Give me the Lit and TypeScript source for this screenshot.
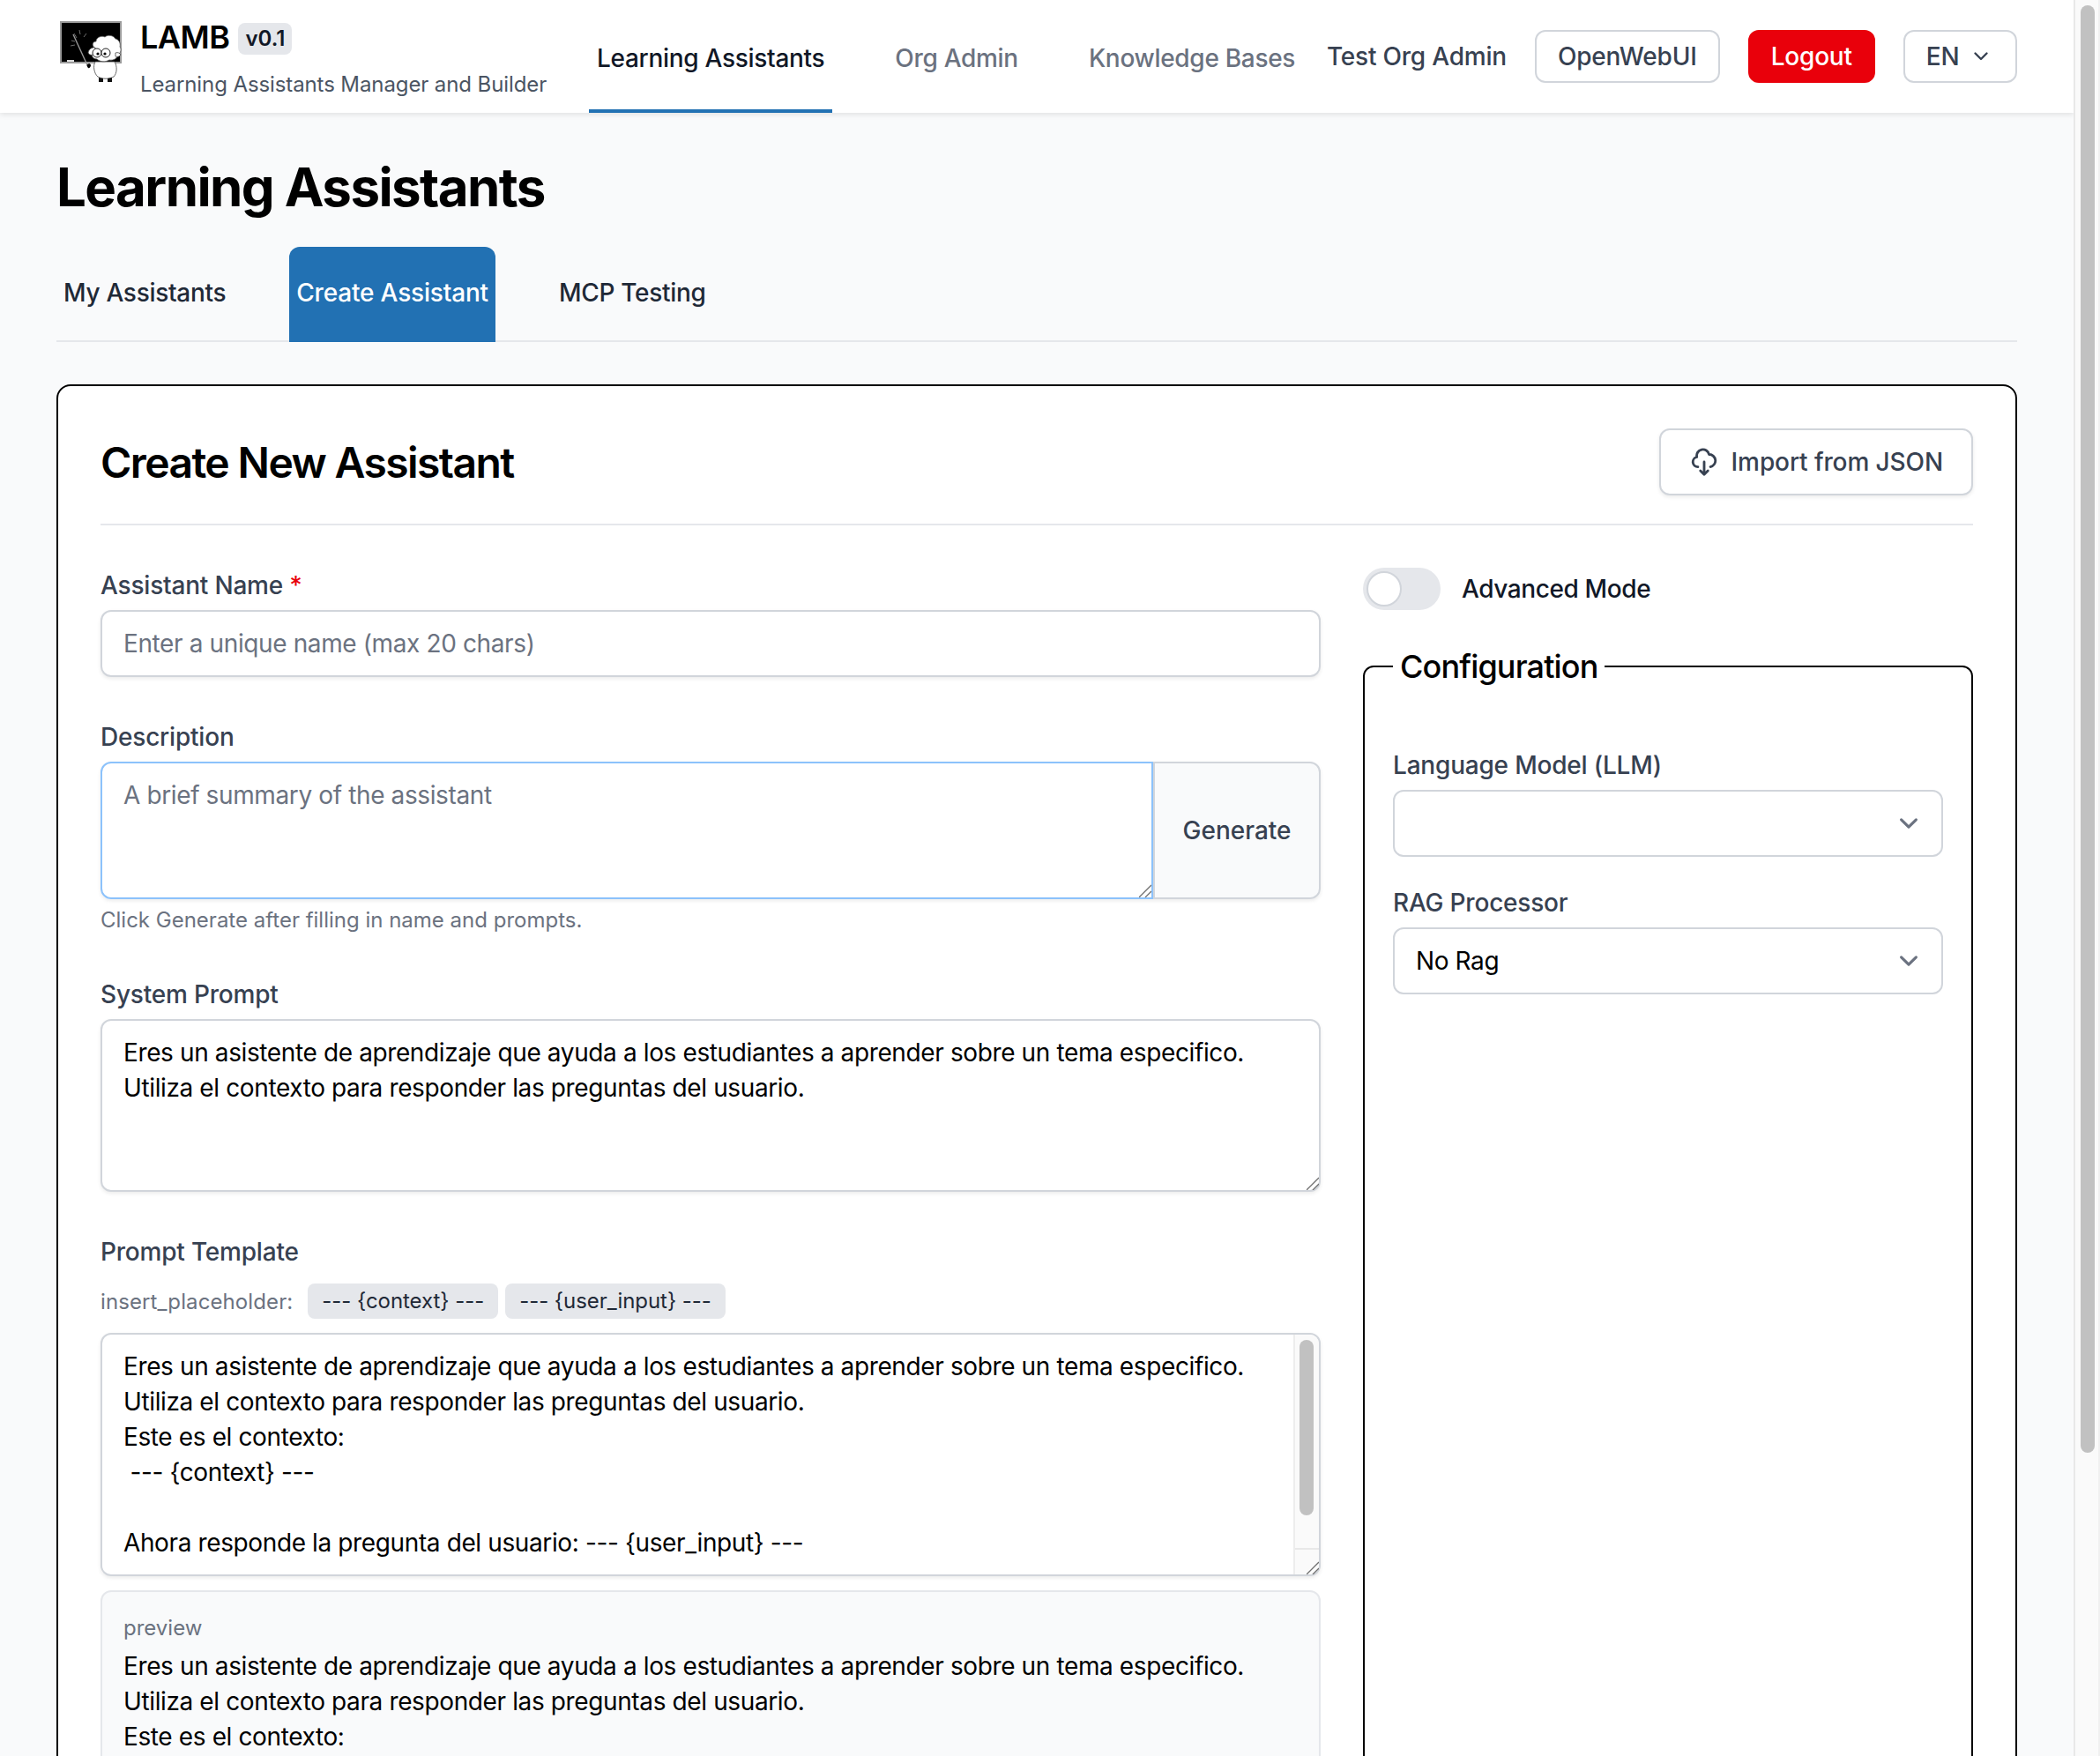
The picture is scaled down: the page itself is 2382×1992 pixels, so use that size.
import { LitElement, css, html, svg } from "lit";
import { customElement } from "lit/decorators.js";

const SYSTEM_PROMPT = `Eres un asistente de aprendizaje que ayuda a los estudiantes a aprender sobre un tema especifico.
Utiliza el contexto para responder las preguntas del usuario.`;

const TEMPLATE = `${SYSTEM_PROMPT}
Este es el contexto:
 --- {context} ---

Ahora responde la pregunta del usuario: --- {user_input} ---
`;

// only the first lines of the preview fit above the fold
const PREVIEW = `${SYSTEM_PROMPT}
Este es el contexto:`;

// sheep at the blackboard, coordinates are px from the logo crop
const logo = svg`
  <rect x="19" y="6" width="68" height="46" fill="#000" stroke="#9a9a9a" stroke-width="2"/>
  <rect x="26" y="49" width="8" height="2" fill="#ddd"/>
  <g stroke="#bbb" stroke-width=".6">
    <path d="M37 24l-3-5M41 20l-1-5M45 23l3-4M30 33l5-1M31 27l4 1"/>
  </g>
  <path d="M33 20l17 37" stroke="#999" stroke-width="1.4"/>
  <path d="M49 54c1-1 4-1 4 1s-2 4-3 3-2-3-1-4z" fill="#000"/>
  <path d="M58 51c-3 5-1 14 3 17 5 3 13 3 18 0 4-4 4-12 1-17z" fill="#fff" stroke="#444" stroke-width=".8"/>
  <path d="M62 69l0 5h5l0-4zM72 70v4h5v-5z" fill="#111"/>
  <g transform="translate(0 -3)">
    <path d="M57 38c-3-3-2-7 2-7 0-5 7-7 10-5 3-3 10-2 12 2 4 1 6 5 5 9 2 3 1 7-2 9-1 4-5 7-10 6-5 3-11 2-14-1-4 0-6-3-6-6-1-1 2-5 3-7z" fill="#fff" stroke="#555" stroke-width=".8"/>
    <path d="M58 38c-4-1-8 3-8 6 1 3 6 3 9 1z" fill="#fff" stroke="#444" stroke-width=".9"/>
    <circle cx="60" cy="44" r="5" fill="#fff" stroke="#222" stroke-width="1"/>
    <circle cx="70" cy="44" r="5" fill="#fff" stroke="#222" stroke-width="1"/>
    <circle cx="61" cy="45" r="1.6" fill="#000"/>
    <circle cx="69" cy="45" r="1.6" fill="#000"/>
    <path d="M81 44c2-1 5 0 6 2-1 2-4 3-6 2z" fill="#fff" stroke="#444" stroke-width=".8"/>
  </g>
`;

const grip = html`<svg class="grip" width="14" height="15" viewBox="0 0 14 15" fill="none" stroke="#6f6f6f" stroke-width="1.3"><path d="M0 15L14 1M7 15l7-7"/></svg>`;

@customElement("app-root")
export class AppRoot extends LitElement {
  static styles = css`
    :host {
      display: block;
      font-family: Inter, "Liberation Sans", sans-serif;
      color: #000;
    }
    * {
      box-sizing: border-box;
    }
    .viewport {
      display: flex;
      height: 100vh;
      overflow: hidden;
      background: #f9fafb;
    }
    .page {
      flex: 1;
      min-width: 0;
      overflow: hidden;
    }
    .page-bar {
      flex: none;
      width: 30px;
      background: #fafafa;
      border-left: 2px solid #e8e8e8;
      border-right: 2px solid #f0f0f0;
      padding: 6px 0 0 6px;
    }
    .page-thumb {
      width: 16px;
      height: 1642px;
      border-radius: 8px;
      background: #c1c1c1;
    }

    /* top bar */
    header {
      height: 128px;
      background: #fff;
      box-shadow: 0 2px 6px rgba(0, 0, 0, 0.1);
      display: flex;
      align-items: stretch;
      padding: 0 64px 0 68px;
      position: relative;
    }
    .logo {
      width: 70px;
      height: 76px;
      margin-top: 22px;
      flex: none;
    }
    .brand {
      margin-left: 21px;
      width: 509px;
      flex: none;
    }
    .brand-top {
      display: flex;
      align-items: center;
      gap: 10px;
      margin-top: 22px;
      height: 40px;
    }
    .brand-name {
      font-size: 36px;
      font-weight: 600;
      line-height: 40px;
      letter-spacing: -0.5px;
    }
    .badge {
      background: #e5e7eb;
      border-radius: 8px;
      font-size: 24px;
      font-weight: 600;
      padding: 0 8px;
      height: 36px;
      line-height: 36px;
      margin-top: 4px;
      color: #111827;
    }
    .brand-sub {
      margin-top: 18px;
      font-size: 24px;
      line-height: 32px;
      letter-spacing: -0.1px;
      color: #4b5563;
    }
    nav {
      display: flex;
      flex: 1;
    }
    .nav-link {
      font-size: 28px;
      font-weight: 500;
      line-height: 40px;
      letter-spacing: -0.3px;
      padding: 46px 9px 0;
      margin-right: 62px;
      color: #6b7280;
      border-bottom: 4px solid transparent;
    }
    .nav-link:last-child {
      margin-right: 0;
    }
    .nav-link.active {
      color: #111827;
      border-bottom-color: #2271b3;
    }
    .actions {
      display: flex;
      align-items: center;
      margin-left: -8px;
      flex: none;
    }
    .org {
      font-size: 28px;
      font-weight: 500;
      letter-spacing: -0.2px;
      color: #374151;
      margin-right: 32px;
    }
    .btn {
      height: 60px;
      border-radius: 12px;
      border: 2px solid #d1d5db;
      background: #fff;
      color: #374151;
      font: 500 28px/40px Inter, sans-serif;
      letter-spacing: -0.2px;
      padding: 0 24px;
      display: flex;
      align-items: center;
    }
    .btn.logout {
      background: #e9000b;
      border-color: #e9000b;
      color: #fff;
      margin: 0 32px;
    }
    .btn.lang {
      gap: 14px;
      padding-right: 29.5px;
    }

    /* page */
    main {
      padding: 48px 64px 48px;
    }
    h1 {
      margin: 0;
      font-size: 60px;
      line-height: 72px;
      font-weight: 700;
      letter-spacing: -1.58px;
    }
    .tabs {
      display: flex;
      margin-top: 32px;
      border-bottom: 2px solid #e5e7eb;
      height: 108px;
    }
    .tab {
      font-size: 28px;
      font-weight: 500;
      line-height: 40px;
      letter-spacing: -0.3px;
      padding: 32px 8px 36px;
      margin-right: 64px;
      color: #1f2937;
      height: 108px;
      border-radius: 12px 12px 0 0;
    }
    .tab.active {
      background: #2271b3;
      color: #fff;
      letter-spacing: -0.18px;
    }

    .card {
      margin-top: 48px;
      background: #fff;
      border: 2px solid #000;
      border-radius: 16px;
      padding: 48px;
    }
    .card-head {
      display: flex;
      justify-content: space-between;
      align-items: center;
      padding-bottom: 32px;
      border-bottom: 2px solid #e5e7eb;
      margin-bottom: 48px;
    }
    h2 {
      margin: 2px 0 0;
      font-size: 48px;
      line-height: 64px;
      font-weight: 600;
      letter-spacing: -1.6px;
    }
    .import {
      height: 76px;
      padding: 0 32px;
      gap: 14px;
      letter-spacing: -0.1px;
      box-shadow: 0 2px 4px rgba(0, 0, 0, 0.08);
    }
    .import svg {
      width: 34px;
      height: 34px;
    }
    .columns {
      display: grid;
      grid-template-columns: 2fr 1fr;
      gap: 48px;
    }
    .left {
      display: flex;
      flex-direction: column;
      gap: 48px;
      min-width: 0;
    }
    .right {
      display: flex;
      flex-direction: column;
      min-width: 0;
    }
    label,
    .label {
      display: block;
      font-size: 28px;
      font-weight: 500;
      line-height: 40px;
      letter-spacing: -0.2px;
      color: #374151;
      margin-bottom: 8px;
    }
    .label.flush {
      margin-bottom: 0;
    }
    .req {
      color: #e9000b;
    }
    input,
    textarea,
    select {
      display: block;
      width: 100%;
      font: 400 28px/40px Inter, sans-serif;
      letter-spacing: -0.38px;
      color: #000;
      background: #fff;
      border: 2px solid #d1d5db;
      border-radius: 12px;
      padding: 16px 24px;
      box-shadow: 0 2px 4px rgba(0, 0, 0, 0.08);
      outline: none;
      margin: 0;
    }
    textarea {
      resize: none;
      overflow: hidden;
    }
    input {
      height: 76px;
    }
    ::placeholder {
      color: #6b7280;
      opacity: 1;
    }
    select {
      appearance: none;
      height: 76px;
      padding: 0 24px;
      box-shadow: none;
      background-image: url("data:image/svg+xml,%3csvg xmlns='http://www.w3.org/2000/svg' fill='none' viewBox='0 0 20 20'%3e%3cpath stroke='%236b7280' stroke-linecap='round' stroke-linejoin='round' stroke-width='1.5' d='M6 8l4 4 4-4'/%3e%3c/svg%3e");
      background-position: right 16px center;
      background-repeat: no-repeat;
      background-size: 42px 42px;
    }
    .ta-wrap {
      position: relative;
    }
    .grip {
      position: absolute;
      right: 2px;
      bottom: 2px;
      pointer-events: none;
    }
    /* fake textarea scrollbar, the screenshot browser hides the native one */
    .ta-bar {
      position: absolute;
      top: 2px;
      right: 2px;
      bottom: 2px;
      width: 29px;
      background: #fafafa;
      border-left: 2px solid #ededed;
      border-radius: 0 10px 10px 0;
      padding: 6px 0 0 5px;
    }
    .ta-thumb {
      width: 16px;
      height: 199px;
      border-radius: 8px;
      background: #c1c1c1;
    }
    .ta-corner {
      position: absolute;
      left: 0;
      right: 0;
      bottom: 0;
      height: 30px;
      border-top: 2px solid #e8e8e8;
    }
    .desc-row {
      display: flex;
      border-radius: 12px;
      box-shadow: 0 2px 4px rgba(0, 0, 0, 0.08);
    }
    .desc-row .ta-wrap {
      flex: 1;
      min-width: 0;
    }
    .desc-row textarea {
      border-color: #8cc2fb;
      border-radius: 12px 0 0 12px;
      box-shadow: none;
    }
    .generate {
      flex: none;
      width: 190px;
      background: #f9fafb;
      border: 2px solid #d1d5db;
      border-radius: 0 12px 12px 0;
      color: #374151;
      font: 500 28px/40px Inter, sans-serif;
      padding: 0;
    }
    .hint {
      margin-top: 8px;
      font-size: 24px;
      line-height: 32px;
      color: #6b7280;
    }
    .chips {
      display: flex;
      align-items: center;
      gap: 8px;
      margin: 16px 0;
      height: 40px;
      font-size: 24px;
      color: #6b7280;
    }
    .chips span.title {
      margin-right: 9px;
      letter-spacing: 0.1px;
    }
    .chip {
      background: #e5e7eb;
      color: #1f2937;
      border-radius: 8px;
      font-size: 24px;
      line-height: 40px;
      padding: 0 16px;
      letter-spacing: -0.05px;
    }
    .preview {
      margin-top: 16px;
      background: #f9fafb;
      border: 2px solid #e5e7eb;
      border-radius: 12px;
      padding: 25px 24px 24px;
      font-size: 28px;
      line-height: 40px;
      letter-spacing: -0.38px;
      white-space: pre-wrap;
    }
    .preview-title {
      font-size: 24px;
      line-height: 32px;
      letter-spacing: 0;
      color: #6b7280;
      margin-bottom: 7px;
    }
    .toggle-row {
      display: flex;
      align-items: center;
      gap: 24px;
      height: 48px;
      margin-bottom: 42px;
      font-size: 28px;
      font-weight: 500;
      letter-spacing: -0.4px;
      color: #111827;
    }
    .toggle {
      width: 88px;
      height: 48px;
      border-radius: 24px;
      background: #e5e7eb;
      padding: 4px;
      flex: none;
    }
    .knob {
      width: 40px;
      height: 40px;
      border-radius: 50%;
      background: #fff;
      border: 2px solid #d1d5db;
    }
    fieldset {
      flex: 1;
      margin: 0;
      min-width: 0;
      border: 2px solid #000;
      border-radius: 12px;
      padding: 32px;
    }
    legend {
      font-size: 36px;
      line-height: 44px;
      font-weight: 500;
      letter-spacing: -0.85px;
      padding: 0 8px;
    }
    .field {
      margin-top: 32px;
    }
    .field.first {
      margin-top: 38px;
    }
  `;

  render() {
    return html`
      <div class="viewport">
        <div class="page">
          <header>
            <svg class="logo" viewBox="18 3 70 76" aria-label="LAMB logo">${logo}</svg>
            <div class="brand">
              <div class="brand-top">
                <span class="brand-name">LAMB</span>
                <span class="badge">v0.1</span>
              </div>
              <div class="brand-sub">Learning Assistants Manager and Builder</div>
            </div>
            <nav>
              <div class="nav-link active">Learning Assistants</div>
              <div class="nav-link">Org Admin</div>
              <div class="nav-link">Knowledge Bases</div>
            </nav>
            <div class="actions">
              <span class="org">Test Org Admin</span>
              <button class="btn">OpenWebUI</button>
              <button class="btn logout">Logout</button>
              <button class="btn lang">
                EN
                <svg width="20" height="20" viewBox="0 0 20 20" fill="none" stroke="#374151" stroke-width="2.4" stroke-linecap="round" stroke-linejoin="round"><path d="M3.5 6.5L10 13l6.5-6.5"/></svg>
              </button>
            </div>
          </header>

          <main>
            <h1>Learning Assistants</h1>
            <div class="tabs">
              <div class="tab">My Assistants</div>
              <div class="tab active">Create Assistant</div>
              <div class="tab">MCP Testing</div>
            </div>

            <section class="card">
              <div class="card-head">
                <h2>Create New Assistant</h2>
                <button class="btn import">
                  <svg viewBox="0 0 24 24" fill="none" stroke="#374151" stroke-width="2" stroke-linecap="round" stroke-linejoin="round"><path d="M7 16a4 4 0 01-.88-7.903A5 5 0 1115.9 6L16 6a5 5 0 011 9.9"/><path d="M9 19l3 3 3-3M12 12v10"/></svg>
                  Import from JSON
                </button>
              </div>

              <div class="columns">
                <div class="left">
                  <div>
                    <label>Assistant Name <span class="req">*</span></label>
                    <input placeholder="Enter a unique name (max 20 chars)" />
                  </div>
                  <div>
                    <label>Description</label>
                    <div class="desc-row">
                      <div class="ta-wrap">
                        <textarea rows="3" placeholder="A brief summary of the assistant"></textarea>
                        ${grip}
                      </div>
                      <button class="generate">Generate</button>
                    </div>
                    <div class="hint">Click Generate after filling in name and prompts.</div>
                  </div>
                  <div>
                    <label>System Prompt</label>
                    <div class="ta-wrap">
                      <textarea rows="4" .value=${SYSTEM_PROMPT}></textarea>
                      ${grip}
                    </div>
                  </div>
                  <div>
                    <div class="label flush">Prompt Template</div>
                    <div class="chips">
                      <span class="title">insert_placeholder:</span>
                      <span class="chip">--- {context} ---</span>
                      <span class="chip">--- {user_input} ---</span>
                    </div>
                    <div class="ta-wrap">
                      <textarea rows="6" .value=${TEMPLATE}></textarea>
                      <div class="ta-bar">
                        <div class="ta-thumb"></div>
                        <div class="ta-corner"></div>
                      </div>
                      ${grip}
                    </div>
                    <div class="preview"><div class="preview-title">preview</div>${PREVIEW}</div>
                  </div>
                </div>

                <div class="right">
                  <div class="toggle-row">
                    <div class="toggle"><div class="knob"></div></div>
                    Advanced Mode
                  </div>
                  <fieldset>
                    <legend>Configuration</legend>
                    <div class="field first">
                      <label>Language Model (LLM)</label>
                      <select><option></option></select>
                    </div>
                    <div class="field">
                      <label>RAG Processor</label>
                      <select><option>No Rag</option></select>
                    </div>
                  </fieldset>
                </div>
              </div>
            </section>
          </main>
        </div>
        <div class="page-bar"><div class="page-thumb"></div></div>
      </div>
    `;
  }
}
